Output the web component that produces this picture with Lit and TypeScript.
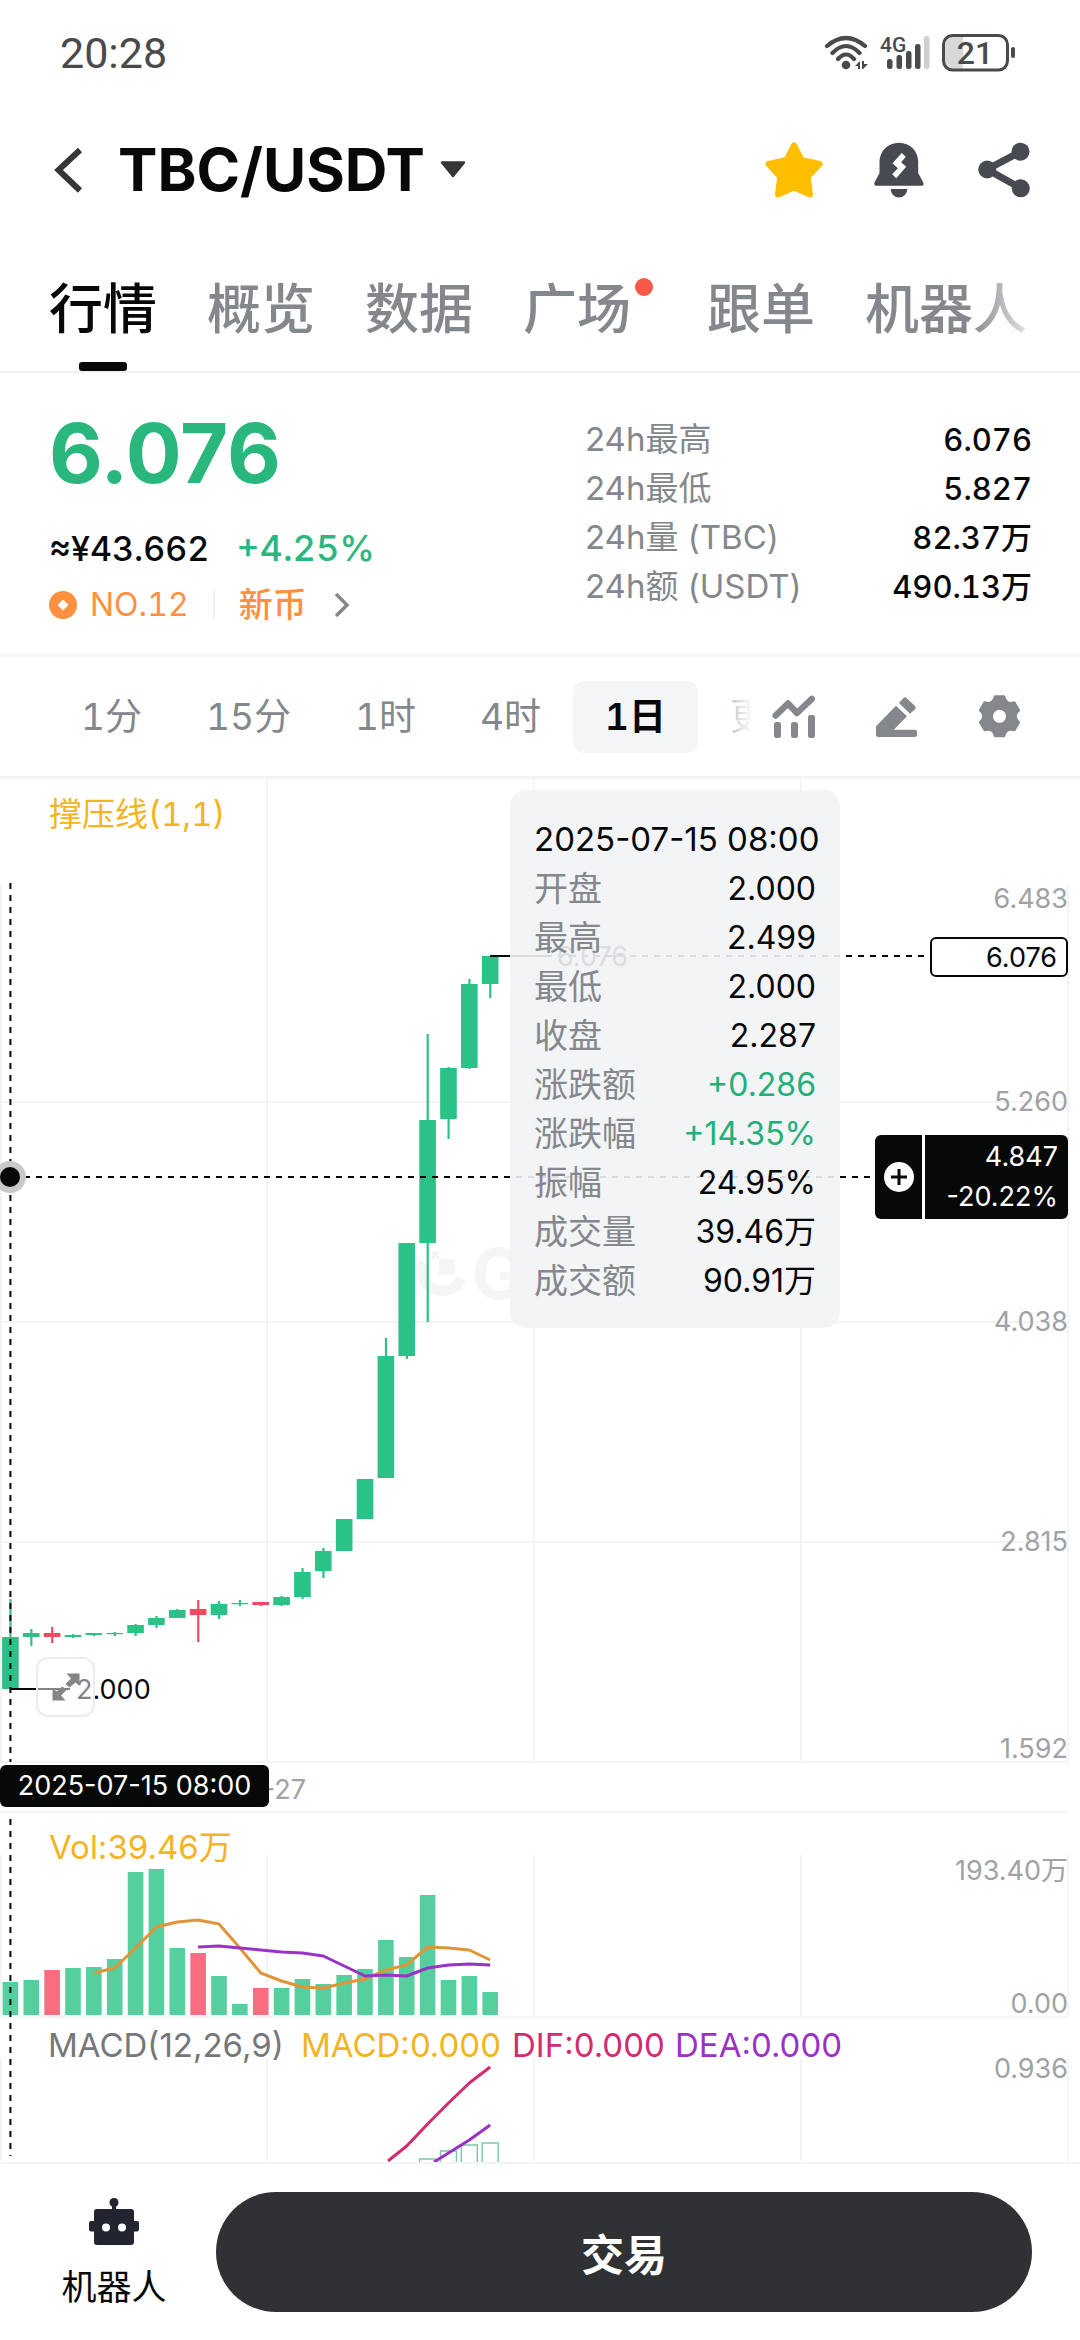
import { LitElement, html, svg, css } from "lit";
import { customElement, state } from "lit/decorators.js";
import { classMap } from "lit/directives/class-map.js";

type Candle = { up: boolean; top: number; bottom: number; high: number; low: number; vol: number };

// Chart canvas: 1080 x 1383 units. Rows hold [up, body top, body bottom, wick top, wick bottom, volume top].
const RAW: [number, number, number, number, number, number][] = [
  [1, 858, 910, 820, 910, 1203],
  [1, 854, 858, 850, 867, 1201],
  [0, 854, 858, 848, 864, 1191],
  [1, 856, 858, 855, 859, 1189],
  [1, 854, 856, 854, 857, 1188],
  [1, 854, 855, 853, 857, 1180],
  [1, 846, 854, 845, 857, 1093],
  [1, 839, 846, 837, 849, 1090],
  [1, 831, 839, 830, 839, 1169],
  [0, 830, 836, 821, 863, 1174],
  [1, 825, 836, 822, 840, 1197],
  [1, 824, 825, 821, 827, 1225],
  [0, 823, 826, 823, 827, 1209],
  [1, 818, 826, 817, 827, 1209],
  [1, 793, 818, 789, 820, 1200],
  [1, 772, 792, 769, 799, 1205],
  [1, 740, 772, 740, 772, 1196],
  [1, 700, 740, 700, 740, 1190],
  [1, 577, 699, 559, 699, 1161],
  [1, 464, 577, 464, 580, 1178],
  [1, 341, 464, 255, 543, 1116],
  [1, 289, 340, 288, 360, 1201],
  [1, 205, 289, 200, 290, 1197],
  [1, 177, 205, 177, 219, 1213],
];
const CANDLES: Candle[] = RAW.map(([up, top, bottom, high, low, vol]) => ({ up: !!up, top, bottom, high, low, vol }));
const cx = (i: number) => 10.4 + 20.86 * i;
const line = (from: number, ys: number[]) => ys.map((y, i) => `${cx(from + i).toFixed(1)},${y}`).join(" ");

const VOL_BASE = 1236;
const MA5 = "94,1194 " + line(5, [1189, 1169, 1148, 1143, 1141, 1145, 1169, 1194, 1202, 1208, 1209, 1204, 1200, 1191, 1186, 1168, 1169, 1171, 1181]);
const MA10 = line(9, [1168, 1167, 1169, 1171, 1173, 1174, 1177, 1187, 1197, 1196, 1197, 1189, 1186, 1185, 1186]);
const DIF = "388,1382 " + line(19, [1367, 1345, 1324, 1304, 1288]);
const DEA = "434,1383 " + line(21, [1374, 1361, 1346]);

function gearPath(): string {
  const p = (r: number, deg: number) => {
    const a = (deg * Math.PI) / 180;
    return `${(21.5 + r * Math.cos(a)).toFixed(2)} ${(22.3 + r * Math.sin(a)).toFixed(2)}`;
  };
  let d = "";
  for (let k = 0; k < 6; k++) {
    const a = -90 + 60 * k;
    d += `${k ? "L" : "M"}${p(20.5, a - 13)}L${p(20.5, a + 13)}Q${p(13, a + 30)} ${p(20.5, a + 47)}`;
  }
  return d + "Z";
}

@customElement("market-chart")
export class MarketChart extends LitElement {
  static styles = css`
    :host {
      display: block; position: relative; font-family: Inter, "Noto Sans CJK SC", sans-serif;
      font-variant-numeric: normal;
    }
    button { font: inherit; border: 0; padding: 0; margin: 0; background: none; color: inherit; cursor: pointer; }
    .plot { display: block; width: 100%; height: auto; }
    .grid { stroke: #f3f4f5; stroke-width: 2; fill: none; }
    .axis { font-size: 27px; fill: #a0a2a4; text-anchor: end; }
    .label { font-size: 27px; fill: #070808; }
    .legend { font-size: 33px; }
    .tabular { font-variant-numeric: tabular-nums; }
    .gold { fill: #f3b41f; }
    .gray { fill: #75777a; }
    .pink { fill: #d42a72; }
    .violet { fill: #9b32c8; }
    .up { fill: #2bc287; stroke: none; }
    .down { fill: #f2495e; stroke: none; }
    .vup { fill: #55cf9e; }
    .vdown { fill: #fa6d80; }
    .hist { fill: #fff; stroke: #7cc7a7; stroke-width: 1.4; }
    .ma { fill: none; stroke-width: 3; stroke-linejoin: round; }
    .ma5 { stroke: #e09638; }
    .ma10 { stroke: #9b32c8; }
    .dif { stroke: #d42a72; }
    .cross { stroke: #070808; stroke-width: 2; stroke-dasharray: 6 6; fill: none; }
    .solid { stroke: #070808; stroke-width: 2; }
    .mark { fill: #f4f6f6; }
    .markline { fill: none; stroke: #f4f6f6; stroke-width: 11; }
    .marktext { fill: #f4f6f6; font-size: 70px; font-weight: 700; }
    .tip {
      position: absolute; top: 11px; left: 510px; width: 330px; box-sizing: border-box;
      padding: 25px 24px 23px; border-radius: 16px; background: rgba(241, 243, 245, 0.9);
      font-size: 32px; line-height: 49px; color: #070808;
    }
    .tip-time { white-space: nowrap; font-size: 33px; }
    .tip-list { margin: 0; }
    .tip-row { display: flex; justify-content: space-between; }
    .tip-row dt { color: #84888c; font-size: 34px; }
    .tip-row dd { margin: 0; }
    .tip-row .rise { color: #24ae78; }
    .last {
      position: absolute; top: 158px; right: 12px; width: 138px; height: 40px; box-sizing: border-box;
      border: 2px solid #070808; border-radius: 6px; background: #fff; padding-right: 9px;
      text-align: right; font-size: 27px; line-height: 38px; color: #070808;
    }
    .tag {
      position: absolute; top: 356px; right: 12px; width: 193px; height: 84px; display: flex; gap: 3px; color: #fff;
    }
    .add { width: 47px; background: #070808; border-radius: 6px 0 0 6px; display: grid; place-items: center; }
    .tag-values {
      flex: 1; background: #070808; border-radius: 0 6px 6px 0; padding: 2px 10px 0 0; text-align: right;
      box-sizing: border-box; font-size: 27px; line-height: 40px;
    }
    .date {
      position: absolute; top: 986px; left: 0; width: 269px; height: 42px; box-sizing: border-box; text-align: center;
      background: #070808; color: #fff; border-radius: 6px; font-size: 27px; line-height: 42px; white-space: nowrap;
    }
    .expand {
      position: absolute; top: 878px; left: 36px; width: 59px; height: 60px; box-sizing: border-box;
      border: 2px solid #ececec; border-radius: 12px; background: rgba(255, 255, 255, 0.5); display: grid; place-items: center;
    }
  `;

  private rows: [string, string, boolean][] = [
    ["开盘", "2.000", false],
    ["最高", "2.499", false],
    ["最低", "2.000", false],
    ["收盘", "2.287", false],
    ["涨跌额", "+0.286", true],
    ["涨跌幅", "+14.35%", true],
    ["振幅", "24.95%", false],
    ["成交量", "39.46万", false],
    ["成交额", "90.91万", false],
  ];

  render() {
    return html`
      <svg class="plot" viewBox="0 0 1080 1383" role="img" aria-label="TBC/USDT K线图">
        <path class="grid" d="M267 0V983M534 0V983M801 0V983M1 105V983M1068 105V983M0 323H1068M0 543H1068M0 763H1068M0 983H1068M0 1033H1068" />
        <path class="grid" d="M1 1076V1238M267 1076V1238M534 1076V1238M801 1076V1238M1068 1076V1238M0 1238H1068" />
        <path class="grid" d="M1 1280V1382M267 1280V1382M534 1280V1382M801 1280V1382M1068 1280V1382" />

        <path class="markline" d="M424 483A20 20 0 1 0 461 500" />
        <path class="mark" d="M439 480H455V496H439ZM432 472H439V480H432Z" />
        <text class="marktext" x="472" y="520">G</text>

        ${CANDLES.map((c, i) => svg`
          <g class=${c.up ? "up" : "down"}>
            <rect x=${cx(i) - 1} y=${c.high} width="2.2" height=${c.low - c.high} />
            <rect x=${cx(i) - 8.3} y=${c.top} width="16.6" height=${Math.max(c.bottom - c.top, 1.2)} />
          </g>
          <rect class=${c.up ? "vup" : "vdown"} x=${cx(i) - 7.8} y=${c.vol} width="15.6" height=${VOL_BASE - c.vol} />`)}
        ${[[20, 1380], [21, 1372], [22, 1366], [23, 1364]].map(([i, y]) => svg`
          <path class="hist" d=${`M${cx(i) - 8} 1383V${y}H${cx(i) + 8}V1383`} />`)}
        <polyline class="ma ma5" points=${MA5} />
        <polyline class="ma ma10" points=${MA10} />
        <polyline class="ma dif" points=${DIF} />
        <polyline class="ma ma10" points=${DEA} />

        <text class="axis" x="1068" y="129">6.483</text>
        <text class="axis" x="1068" y="332">5.260</text>
        <text class="axis" x="1068" y="552">4.038</text>
        <text class="axis" x="1068" y="772">2.815</text>
        <text class="axis" x="1068" y="979">1.592</text>
        <text class="axis" x="1068" y="1101">193.40万</text>
        <text class="axis" x="1068" y="1234">0.00</text>
        <text class="axis" x="1068" y="1299">0.936</text>
        <text class="axis" x="306" y="1020">07-27</text>

        <text class="legend gold tabular" x="49" y="47">撑压线(1,1)</text>
        <text class="legend gold" x="49" y="1080">Vol:39.46万</text>
        <text class="legend gray" x="48" y="1278">MACD(12,26,9)</text>
        <text class="legend gold" x="301" y="1278">MACD:0.000</text>
        <text class="legend pink" x="512" y="1278">DIF:0.000</text>
        <text class="legend violet" x="675" y="1278">DEA:0.000</text>

        <path class="solid" d="M10 910H70M490 177H552" />
        <text class="label" x="76" y="920">2.000</text>
        <text class="label" x="557" y="187">6.076</text>
        <path class="cross" d="M558 177H924" />
        <path class="cross" d="M10.4 104V983M10.4 1040V1377" />
        <path class="cross" d="M24 398H875" />
        <circle cx="10" cy="398" r="16" fill="#c9c9c9" />
        <circle cx="10" cy="398" r="10" fill="#070808" />
      </svg>

      <section class="tip">
        <div class="tip-time">2025-07-15 08:00</div>
        <dl class="tip-list">
          ${this.rows.map(([k, v, rise]) => html`
            <div class="tip-row"><dt>${k}</dt><dd class=${classMap({ rise })}>${v}</dd></div>`)}
        </dl>
      </section>
      <div class="last">6.076</div>
      <div class="tag">
        <button class="add" aria-label="添加">
          <svg width="30" height="30" viewBox="0 0 30 30">
            <circle cx="15" cy="15" r="15" fill="#fff" />
            <path d="M7 15H23M15 7V23" stroke="#070808" stroke-width="3" />
          </svg>
        </button>
        <div class="tag-values"><div>4.847</div><div>-20.22%</div></div>
      </div>
      <div class="date">2025-07-15 08:00</div>
      <button class="expand" aria-label="全屏">
        <svg width="28" height="28" viewBox="0 0 28 28" fill="#858585">
          <path d="M14.500 0.500H27.500V13L23.500 9.500L17.500 14.500L13.500 11L19 5.500Z" />
          <path d="M13.500 27.500H0.500V15L4.500 18.500L10.500 13.500L14.500 17L9 22.500Z" />
        </svg>
      </button>
    `;
  }
}

@customElement("app-root")
export class AppRoot extends LitElement {
  static styles = css`
    :host {
      display: flex; flex-direction: column; min-height: 100vh; background: #fff; color: #070808;
      font-family: Inter, "Noto Sans CJK SC", sans-serif;
    }
    button { font: inherit; border: 0; padding: 0; margin: 0; background: none; color: inherit; cursor: pointer; }
    svg { display: block; }
    .status {
      display: flex; align-items: center; justify-content: space-between; height: 105px; padding: 0 64px 0 60px;
      font-family: Roboto, sans-serif; font-size: 43px; color: #4a4a4a;
    }
    .indicators { display: flex; gap: 12px; }
    .header { display: flex; align-items: center; height: 130px; padding: 0 46px 0 50px; }
    .back { width: 68px; }
    .pair { display: flex; align-items: center; gap: 14px; font-size: 59px; font-weight: 700; line-height: 70px; }
    .actions { display: flex; gap: 45px; margin-left: auto; }
    .tabs {
      display: flex; gap: 50px; padding: 45px 0 0 49px; border-bottom: 2px solid #f0f1f2; overflow: hidden;
      font-size: 54px; font-weight: 500; color: #84888c; white-space: nowrap; position: relative;
    }
    .tab { flex: none; position: relative; line-height: 60px; font-weight: 500; }
    .tab::after { content: ""; display: block; width: 48px; height: 9px; margin: 22px auto 0; border-radius: 3px; }
    .tab.active { color: #070808; }
    .tab.active::after { background: #070808; }
    .tab.dotted { margin-right: 26px; }
    .dot { position: absolute; top: -2px; right: -22px; width: 18px; height: 18px; border-radius: 50%; background: #f9594a; }
    .fade { position: absolute; top: 0; right: 0; bottom: 0; width: 110px; background: linear-gradient(90deg, rgba(255,255,255,0), #fff 70%); }
    .summary { display: flex; justify-content: space-between; padding: 32px 48px 25px 49px; border-bottom: 3px solid #f3f4f5; }
    .price { font-size: 83px; font-weight: 700; line-height: 96px; color: #2ab77d; }
    .fiat {
      display: flex; align-items: baseline; gap: 27px; margin-top: 23px; font-size: 34px; line-height: 48px;
      font-weight: 500; font-variant-numeric: tabular-nums;
    }
    .change { color: #2ab77d; font-size: 36px; }
    .rank { display: flex; align-items: center; margin-top: 8px; font-size: 34px; line-height: 48px; color: #ff9040; }
    .rank-no { margin-left: 13px; font-size: 32px; font-variant-numeric: tabular-nums; }
    .rule { width: 2px; height: 28px; background: #eeeff0; margin: 0 24px; }
    .rank-tag { margin-right: 26px; font-weight: 500; }
    .stats { width: 447px; margin: 10px 0 0; font-size: 33px; line-height: 49px; }
    .stat { display: flex; justify-content: space-between; }
    .stat dt { color: #84888c; }
    .stat dd { margin: 0; font-size: 31px; font-weight: 500; font-variant-numeric: tabular-nums; }
    .toolbar { display: flex; align-items: center; height: 119px; padding: 0 58px 0 49px; border-bottom: 3px solid #f3f4f5; }
    .periods {
      display: flex; flex: 1; min-width: 0; overflow: hidden; position: relative; font-size: 37px; color: #84888c;
      font-variant-numeric: tabular-nums;
    }
    .period { flex: none; height: 72px; padding: 0 32px; border-radius: 12px; white-space: nowrap; line-height: 72px; font-variant-numeric: tabular-nums; }
    .period.active { background: #f3f5f6; color: #070808; font-weight: 600; }
    .periods::after {
      content: ""; position: absolute; top: 0; right: 0; bottom: 0; width: 48px;
      background: linear-gradient(90deg, rgba(255,255,255,0.4), #fff 60%);
    }
    .tools { display: flex; gap: 59px; color: #84888c; }
    .bottom { display: flex; flex: 1; align-items: center; padding: 0 48px 0 0; border-top: 2px solid #f3f4f5; }
    .bot { width: 216px; font-size: 35px; line-height: 50px; }
    .bot-inner { display: flex; flex-direction: column; align-items: center; gap: 16px; padding: 6px 0 0 12px; }
    .trade { flex: 1; height: 120px; border-radius: 60px; background: #303135; color: #fff; font-size: 43px; font-weight: 700; }
  `;

  @state() private tab = "行情";
  @state() private period = "1日";

  private stats = [
    ["24h最高", "6.076"],
    ["24h最低", "5.827"],
    ["24h量 (TBC)", "82.37万"],
    ["24h额 (USDT)", "490.13万"],
  ];

  render() {
    return html`
      <div class="status">
        <span>20:28</span>
        <div class="indicators">
          <svg width="44" height="40" viewBox="0 0 44 40" fill="#4a4a4a">
            <path d="M3 13Q22-3 41 13M8.500 20Q22 6 35.500 20M14 26Q22 17 30 26" fill="none" stroke="#4a4a4a" stroke-width="4.200" stroke-linecap="round" />
            <circle cx="22" cy="32" r="4.300" />
            <path d="M31 33L36 28V36H34V33ZM38 28H40V31H44L39 36H38Z" />
          </svg>
          <svg width="50" height="40" viewBox="0 0 50 40" fill="#4a4a4a">
            <text x="0" y="19" font-size="21" font-weight="500">4G</text>
            <rect x="7" y="26" width="5.500" height="10" rx="2.500" />
            <rect x="16.500" y="22" width="5.500" height="14" rx="2.500" />
            <rect x="26" y="18" width="5.500" height="18" rx="2.500" />
            <rect x="35" y="11" width="5.500" height="25" rx="2.500" />
            <rect x="44" y="3" width="5.500" height="33" rx="2.500" fill="#cfcfcf" />
          </svg>
          <svg width="74" height="40" viewBox="0 0 74 40" fill="#4a4a4a">
            <path d="M21 3V37H10A8 8 0 0 1 2 29V11A8 8 0 0 1 10 3Z" fill="#d8d8d8" />
            <rect x="1.500" y="2.500" width="64" height="34.500" rx="9" fill="none" stroke="#4a4a4a" stroke-width="3" />
            <text x="33" y="31" font-size="32" font-weight="500" text-anchor="middle">21</text>
            <rect x="69" y="14" width="4" height="11" rx="2" />
          </svg>
        </div>
      </div>

      <header class="header">
        <button class="back" aria-label="返回">
          <svg width="36" height="50" viewBox="0 0 36 50" fill="none" stroke="#35363a" stroke-width="6">
            <path d="M30 5L8.500 25L30 45.500" />
          </svg>
        </button>
        <button class="pair">
          TBC/USDT
          <svg width="28" height="20" viewBox="0 0 28 20"><path d="M3 2.500H25L14 16Z" fill="#35363a" stroke="#35363a" stroke-width="2.500" stroke-linejoin="round" /></svg>
        </button>
        <div class="actions">
          <button aria-label="收藏">
            <svg width="60" height="60" viewBox="0 0 60 60">
              <path d="M30 5.500L37.500 20L55.500 24L43.800 36.800L46 54.500L30 47.500L14 54.500L16.200 36.800L4.500 24L22.500 20Z" fill="#ffbf00" stroke="#ffbf00" stroke-width="6" stroke-linejoin="round" />
            </svg>
          </button>
          <button aria-label="价格提醒">
            <svg width="60" height="60" viewBox="0 0 60 60" fill="#484a52">
              <path d="M30 2.700C19 2.700 10.500 11 10.500 22V33L5.500 42.500Q4.800 45.700 7 45.700H53Q55.200 45.700 54.300 42.500L49.200 33V22C49.200 11 41 2.700 30 2.700Z" />
              <path d="M21.500 49H38.500Q37 57.500 30 57.500T21.500 49Z" />
              <path d="M32.800 13L36.800 16.700L32.200 22.300L37.200 26.700L27.200 38.300L23.200 34.300L28.800 28.300L23.500 23.300Z" fill="#fff" />
            </svg>
          </button>
          <button aria-label="分享">
            <svg width="60" height="60" viewBox="0 0 60 60" fill="#484a52">
              <path d="M46.500 11.700L13.200 29.300L46.800 48.300" fill="none" stroke="#484a52" stroke-width="7" />
              <circle cx="46.500" cy="11.700" r="9" /><circle cx="13.200" cy="29.500" r="9" /><circle cx="46.800" cy="48.300" r="9" />
            </svg>
          </button>
        </div>
      </header>

      <nav class="tabs">
        ${["行情", "概览", "数据", "广场", "跟单", "机器人"].map((t) => html`
          <button class=${classMap({ tab: true, active: t === this.tab, dotted: t === "广场" })} @click=${() => (this.tab = t)}>
            ${t}${t === "广场" ? html`<i class="dot"></i>` : null}
          </button>`)}
        <div class="fade"></div>
      </nav>

      <section class="summary">
        <div>
          <div class="price">6.076</div>
          <div class="fiat"><span>≈¥43.662</span><span class="change">+4.25%</span></div>
          <div class="rank">
            <svg width="28" height="28" viewBox="0 0 28 28">
              <circle cx="14" cy="14" r="14" fill="#ff9040" />
              <path d="M14 9.500L18.500 14L14 18.500L9.500 14Z" fill="#fff" stroke="#fff" stroke-width="1.500" stroke-linejoin="round" />
            </svg>
            <span class="rank-no">NO.12</span>
            <span class="rule"></span>
            <span class="rank-tag">新币</span>
            <svg width="18" height="26" viewBox="0 0 18 26" fill="none" stroke="#84888c" stroke-width="3.500"><path d="M3 2L14 13L3 24" /></svg>
          </div>
        </div>
        <dl class="stats">
          ${this.stats.map(([k, v]) => html`<div class="stat"><dt>${k}</dt><dd>${v}</dd></div>`)}
        </dl>
      </section>

      <div class="toolbar">
        <div class="periods">
          ${["1分", "15分", "1时", "4时", "1日", "更多"].map((p) => html`
            <button class=${classMap({ period: true, active: p === this.period })} @click=${() => (this.period = p)}>${p}</button>`)}
        </div>
        <div class="tools">
          <button aria-label="指标">
            <svg width="44" height="46" viewBox="0 0 44 46" fill="currentColor">
              <path d="M3.700 21.500L16 9.500L25 19L39.700 5" fill="none" stroke="currentColor" stroke-width="6.500" stroke-linecap="round" stroke-linejoin="round" />
              <rect x="2" y="28" width="7" height="16" rx="2.500" /><rect x="19" y="28" width="7" height="16" rx="2.500" /><rect x="36" y="21" width="7" height="23" rx="2.500" />
            </svg>
          </button>
          <button aria-label="画线">
            <svg width="44" height="46" viewBox="0 0 44 46" fill="currentColor">
              <path d="M1 32.300L21 11.700L32 22.300L18.700 35.700H40Q42 35.700 42 37.700V41Q42 43 40 43H3Q1 43 1 41Z" />
              <path d="M28.500 4Q30 2.500 31.500 4L40 12Q41.500 13.700 40 15.200L35 19.700L24 9Z" />
            </svg>
          </button>
          <button aria-label="设置">
            <svg width="44" height="46" viewBox="0 0 44 46">
              <path d=${gearPath()} fill="currentColor" stroke="currentColor" stroke-width="2" stroke-linejoin="round" />
              <circle cx="21.500" cy="22.300" r="6.500" fill="#fff" />
            </svg>
          </button>
        </div>
      </div>

      <market-chart></market-chart>

      <footer class="bottom">
        <button class="bot">
          <span class="bot-inner">
            <svg width="50" height="48" viewBox="0 0 50 48" fill="#22242f">
              <circle cx="25" cy="4.500" r="4.500" /><rect x="23" y="6" width="4" height="6" />
              <rect x="5" y="11" width="40" height="36" rx="3" /><rect x="0" y="23" width="50" height="10.500" rx="2" />
              <circle cx="17" cy="29.500" r="4" fill="#fff" /><circle cx="33" cy="29.500" r="4" fill="#fff" />
            </svg>
            机器人
          </span>
        </button>
        <button class="trade">交易</button>
      </footer>
    `;
  }
}
